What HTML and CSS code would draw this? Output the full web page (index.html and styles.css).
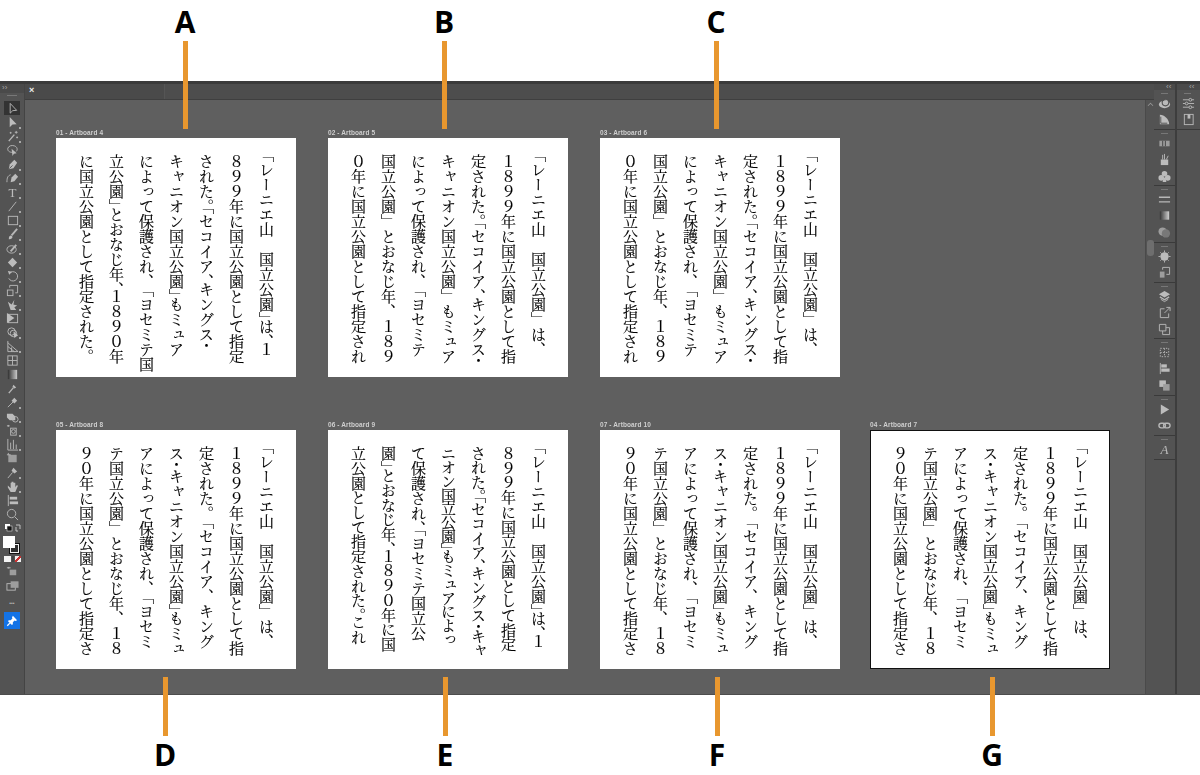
FILE: index.html
```html
<!DOCTYPE html>
<html lang="ja">
<head>
<meta charset="utf-8">
<title>Artboards</title>
<link rel="stylesheet" href="styles.css">
</head>
<body>
<div class="page">
  <div class="top-space"></div>
  <div class="app">
    <aside class="toolbar">
      <div class="collapse">››</div>
      <div class="grip"></div>
      <span class="tool selected"><svg viewBox="0 0 14 14"><path class="line" d="M4.5 1.5V12L7.3 9.3L11.5 9Z"/></svg></span>
      <span class="tool more"><svg viewBox="0 0 14 14"><path class="fill" d="M4 1V12L7 9.2L11.5 8.8Z"/></svg></span>
      <span class="tool more"><svg viewBox="0 0 14 14"><path class="line thick" d="M3 12L9 5"/><path class="line" d="M11 1V4M9.5 2.5H12.5M5 2V4M4 3H6M12 7V9M11 8H13"/></svg></span>
      <span class="tool"><svg viewBox="0 0 14 14"><path class="line" d="M7 9C3 9 1.500 7 2 4.500C3 2 6 1 9 2C12 3 13 6 11 8"/><path class="fill" d="M6 5L7 13L8.500 10.500L11.500 10Z"/></svg></span>
      <span class="tool more"><svg viewBox="0 0 14 14"><path class="fill" d="M9 2L12 5L8 11L3 12L4 7Z"/><path class="dark" d="M3.500 11.500L7 8"/></svg></span>
      <span class="tool more"><svg viewBox="0 0 14 14"><path class="fill" d="M10 2L13 5L9 10L5 11L6 6Z"/><path class="line" d="M1 11C1 6 2 4 5 3"/></svg></span>
      <span class="tool more"><svg viewBox="0 0 14 14"><text class="glyph" x="7" y="12" text-anchor="middle">T</text></svg></span>
      <span class="tool more"><svg viewBox="0 0 14 14"><path class="line" d="M3 12L11 2"/></svg></span>
      <span class="tool more"><svg viewBox="0 0 14 14"><rect class="line" x="2.500" y="2.500" width="10" height="9"/></svg></span>
      <span class="tool more"><svg viewBox="0 0 14 14"><path class="line thick2" d="M12 1L6 8"/><path class="fill" d="M3 12C3 9 4 8 5.500 8L7 9.500C7 11 5 12.500 3 12Z"/></svg></span>
      <span class="tool more"><svg viewBox="0 0 14 14"><ellipse class="line" cx="6" cy="8" rx="5" ry="4"/><path class="line thick2" d="M5 10L11 3"/></svg></span>
      <span class="tool more"><svg viewBox="0 0 14 14"><path class="fill" d="M7 2L12 7L7 12L2 7Z"/></svg></span>
      <span class="tool more"><svg viewBox="0 0 14 14"><path class="line" d="M3 9A5 5 0 1 0 5 2.500"/><path class="fill" d="M2 1L6.500 2L3.500 5Z"/></svg></span>
      <span class="tool more"><svg viewBox="0 0 14 14"><rect class="line" x="1.500" y="6.500" width="6" height="6"/><path class="line" d="M4 4V1.500H12.500V9.500H10"/></svg></span>
      <span class="tool more"><svg viewBox="0 0 14 14"><path class="fill" d="M2 4L6 7L9 2L8 7L12 8L9 10L11 13H5L4 10Z"/></svg></span>
      <span class="tool"><svg viewBox="0 0 14 14"><rect class="line" x="2.500" y="2.500" width="10" height="9"/><path class="fill" d="M1 1L9 6.500L1 12Z"/></svg></span>
      <span class="tool more"><svg viewBox="0 0 14 14"><circle class="line" cx="6" cy="6" r="4"/><circle class="line" cx="8" cy="8" r="3.500"/><path class="fill" d="M8 6L9 13L13 10Z"/></svg></span>
      <span class="tool more"><svg viewBox="0 0 14 14"><path class="line" d="M2 1V12.500H13L2 3M2 7L9 12.500M6 8V12.500"/></svg></span>
      <span class="tool"><svg viewBox="0 0 14 14"><rect class="line" x="2" y="2" width="10" height="10"/><path class="line" d="M7 2V12M2 7H12"/></svg></span>
      <span class="tool"><svg viewBox="0 0 14 14"><defs><linearGradient id="tool-grad"><stop offset="0" stop-color="#2e2e2e"/><stop offset="1" stop-color="#d8d8d8"/></linearGradient></defs><rect x="2" y="2" width="10" height="10" fill="url(#tool-grad)"/></svg></span>
      <span class="tool"><svg viewBox="0 0 14 14"><path class="line thick" d="M3 12L8 6"/><path class="fill" d="M8 3L11 6L9 7L7 5Z"/></svg></span>
      <span class="tool more"><svg viewBox="0 0 14 14"><path class="line" d="M2 12L8 6"/><path class="fill" d="M9 2L12 5L9 8L6 5Z"/></svg></span>
      <span class="tool more"><svg viewBox="0 0 14 14"><path class="fill" d="M1 4H7L10 7V11H4L1 8Z"/><circle class="line" cx="10" cy="10" r="3"/></svg></span>
      <span class="tool more"><svg viewBox="0 0 14 14"><path class="line" d="M1 2H4M2.500 1V3"/><rect class="line" x="5" y="4.500" width="6" height="7.500"/><circle class="line" cx="8" cy="8" r="2"/></svg></span>
      <span class="tool more"><svg viewBox="0 0 14 14"><path class="line" d="M2 1V13H13M5 12V5M8 12V2M11 12V7"/></svg></span>
      <span class="tool"><svg viewBox="0 0 14 14"><rect class="fill-soft" x="2.500" y="3" width="9" height="8"/><path class="line" d="M2.500 1V3M1 3H5"/></svg></span>
      <span class="tool more"><svg viewBox="0 0 14 14"><path class="line" d="M2 13L7 7"/><path class="fill" d="M8 2L12 6L9 8L6 5Z"/></svg></span>
      <span class="tool more"><svg viewBox="0 0 14 14"><path class="fill" d="M2 6L5 9V3H6V7V2H8V7V3H10V8L11 6H13L10 13H5L2 8Z"/></svg></span>
      <span class="tool"><svg viewBox="0 0 14 14"><path class="line" d="M2.500 1V13"/><rect class="fill" x="4" y="3" width="8" height="3"/><rect class="fill" x="4" y="8" width="9" height="3"/></svg></span>
      <span class="tool"><svg viewBox="0 0 14 14"><circle class="line" cx="6" cy="6" r="4.500"/><path class="line" d="M9.500 9.500L13 13"/></svg></span>
      <div class="defaults">
        <svg viewBox="0 0 20 10"><rect x="3" y="1" width="5" height="5" fill="#fff"/><rect x="5" y="3" width="5" height="5" fill="#111" stroke="#ddd" stroke-width=".6"/><path class="line" d="M14 2H18V6M16 8H14V4"/></svg>
      </div>
      <div class="swatches"><span class="stroke-box"></span><span class="fill-box"></span></div>
      <div class="color-row"><span class="color-white"></span><span class="color-grad"></span><span class="color-none"></span></div>
      <span class="tool tiny"><svg viewBox="0 0 14 14"><path class="fill-soft" d="M4 5H11V11H4Z"/><path class="line" d="M3 2V4M1 3H5"/></svg></span>
      <span class="tool tiny"><svg viewBox="0 0 14 14"><rect class="line" x="1" y="5" width="9" height="7"/><rect class="fill-soft" x="5" y="2.500" width="8.500" height="7"/></svg></span>
      <div class="dots">•••</div>
      <div class="pin"><svg viewBox="0 0 14 14"><path class="white" d="M8 1L13 6L11 7L10 6.500L8 8.500L8 11L6.500 11.500L2.500 7.500L3 6L5.500 6L7.500 4L7 3Z"/><path class="white-line" d="M1.500 12.500L4.500 9.500"/></svg></div>
    </aside>

    <div class="workspace">
      <div class="tabbar">
        <div class="tab"><span class="tab-close">×</span></div>
      </div>
      <div class="work-row">
        <main class="canvas">
          <div class="board-row">
            <section class="board">
              <div class="board-label">01 - Artboard 4</div>
              <div class="sheet">
                <p><span class="h">「</span>レーニエ山　国立公園<span class="h">」</span>は<span class="h">、</span>１</p>
                <p>８９９年に国立公園として指定</p>
                <p>された<span class="h">。「</span>セコイア<span class="h">、</span>キングス<span class="h">・</span></p>
                <p>キャニオン国立公園<span class="h">」</span>もミュア</p>
                <p>によって保護され、<span class="h">「</span>ヨセミテ国</p>
                <p>立公園<span class="h">」</span>とおなじ年<span class="h">、</span>１８９０年</p>
                <p>に国立公園として指定された。</p>
              </div>
            </section>
            <section class="board">
              <div class="board-label">02 - Artboard 5</div>
              <div class="sheet">
                <p><span class="h">「</span>レーニエ山　国立公園」は、</p>
                <p>１８９９年に国立公園として指</p>
                <p>定された<span class="h">。「</span>セコイア<span class="h">、</span>キングス<span class="h">・</span></p>
                <p>キャニオン国立公園」もミュア</p>
                <p>によって保護され、<span class="h">「</span>ヨセミテ</p>
                <p>国立公園」とおなじ年、１８９</p>
                <p>０年に国立公園として指定され</p>
              </div>
            </section>
            <section class="board">
              <div class="board-label">03 - Artboard 6</div>
              <div class="sheet">
                <p><span class="h">「</span>レーニエ山　国立公園」は、</p>
                <p>１８９９年に国立公園として指</p>
                <p>定された<span class="h">。「</span>セコイア<span class="h">、</span>キングス<span class="h">・</span></p>
                <p>キャニオン国立公園」もミュア</p>
                <p>によって保護され、<span class="h">「</span>ヨセミテ</p>
                <p>国立公園」とおなじ年、１８９</p>
                <p>０年に国立公園として指定され</p>
              </div>
            </section>
          </div>
          <div class="board-row">
            <section class="board">
              <div class="board-label">05 - Artboard 8</div>
              <div class="sheet">
                <p><span class="h">「</span>レーニエ山　国立公園」は、</p>
                <p>１８９９年に国立公園として指</p>
                <p>定された。<span class="h">「</span>セコイア、キング</p>
                <p>ス<span class="h">・</span>キャニオン国立公園<span class="h">」</span>もミュ</p>
                <p>アによって保護され、<span class="h">「</span>ヨセミ</p>
                <p>テ国立公園」とおなじ年、１８</p>
                <p>９０年に国立公園として指定さ</p>
              </div>
            </section>
            <section class="board">
              <div class="board-label">06 - Artboard 9</div>
              <div class="sheet">
                <p><span class="h">「</span>レーニエ山　国立公園<span class="h">」</span>は<span class="h">、</span>１</p>
                <p class="t1">８９９年に国立公園として指定</p>
                <p class="t2">された<span class="h">。「</span>セコイア<span class="h">、</span>キングス<span class="h">・</span>キャ</p>
                <p class="t3">ニオン国立公園<span class="h">」</span>もミュアによっ</p>
                <p>て保護され<span class="h">、「</span>ヨセミテ国立公</p>
                <p class="t1">園<span class="h">」</span>とおなじ年<span class="h">、</span>１８９０年に国</p>
                <p class="t1">立公園として指定された<span class="h">。</span>これ</p>
              </div>
            </section>
            <section class="board">
              <div class="board-label">07 - Artboard 10</div>
              <div class="sheet">
                <p><span class="h">「</span>レーニエ山　国立公園」は、</p>
                <p>１８９９年に国立公園として指</p>
                <p>定された。<span class="h">「</span>セコイア、キング</p>
                <p>ス<span class="h">・</span>キャニオン国立公園<span class="h">」</span>もミュ</p>
                <p>アによって保護され、<span class="h">「</span>ヨセミ</p>
                <p>テ国立公園」とおなじ年、１８</p>
                <p>９０年に国立公園として指定さ</p>
              </div>
            </section>
            <section class="board board-last">
              <div class="board-label">04 - Artboard 7</div>
              <div class="sheet sheet-active">
                <p><span class="h">「</span>レーニエ山　国立公園」は、</p>
                <p>１８９９年に国立公園として指</p>
                <p>定された。<span class="h">「</span>セコイア、キング</p>
                <p>ス<span class="h">・</span>キャニオン国立公園<span class="h">」</span>もミュ</p>
                <p>アによって保護され、<span class="h">「</span>ヨセミ</p>
                <p>テ国立公園」とおなじ年、１８</p>
                <p>９０年に国立公園として指定さ</p>
              </div>
            </section>
          </div>
        </main>
        <div class="scrollbar"><span class="scroll-up"></span><span class="scroll-thumb"></span></div>
      </div>
    </div>

    <aside class="dock">
      <div class="collapse dock-collapse">‹‹</div>
      <div class="dock-group g1">
        <span class="dock-icon"><svg viewBox="0 0 14 14"><ellipse class="fill" cx="7" cy="8" rx="6" ry="4"/><circle class="dark-line" cx="8" cy="6" r="3.500"/><circle class="line" cx="8.500" cy="5.500" r="2"/></svg></span>
        <span class="dock-icon"><svg viewBox="0 0 14 14"><path class="fill" d="M2 2V12H12C12 7 7 2 2 2Z"/><path class="dark" d="M3 4V11H10"/></svg></span>
      </div>
      <div class="dock-group g2">
        <span class="dock-icon"><svg viewBox="0 0 14 14"><rect class="fill-soft" x="1.500" y="4" width="11" height="6"/><path class="dark-line" d="M5 4V10M8 4V10"/></svg></span>
        <span class="dock-icon"><svg viewBox="0 0 14 14"><path class="fill" d="M3 7H11V13H3Z"/><path class="line" d="M5 7V2M7 7V1M9 7L11 3"/></svg></span>
        <span class="dock-icon"><svg viewBox="0 0 14 14"><circle class="fill" cx="7" cy="4" r="3"/><circle class="fill" cx="3.500" cy="8.500" r="3"/><circle class="fill" cx="10.500" cy="8.500" r="3"/><path class="fill" d="M6 8H8L9 13H5Z"/></svg></span>
      </div>
      <div class="dock-group g3">
        <span class="dock-icon"><svg viewBox="0 0 14 14"><path class="line thick" d="M1 4.500H13M1 9.500H13"/></svg></span>
        <span class="dock-icon"><svg viewBox="0 0 14 14"><defs><linearGradient id="dock-grad"><stop offset="0" stop-color="#333"/><stop offset="1" stop-color="#ddd"/></linearGradient></defs><rect x="2" y="2.500" width="10" height="9" fill="url(#dock-grad)"/></svg></span>
        <span class="dock-icon"><svg viewBox="0 0 14 14"><circle class="fill-soft" cx="5" cy="6" r="4.500"/><circle class="fill-dim" cx="8.500" cy="8" r="4.500"/></svg></span>
      </div>
      <div class="dock-group g4">
        <span class="dock-icon"><svg viewBox="0 0 14 14"><circle class="fill" cx="7" cy="7" r="4.500"/><path class="line" d="M7 .5V2.500M7 11.500V13.500M.5 7H2.500M11.500 7H13.500M2.500 2.500L4 4M10 10L11.500 11.500M2.500 11.500L4 10M10 4L11.500 2.500"/></svg></span>
        <span class="dock-icon"><svg viewBox="0 0 14 14"><path class="line" d="M5 4V1.500H12.500V9H9"/><rect class="fill-soft" x="2" y="6" width="5" height="6.500"/></svg></span>
      </div>
      <div class="dock-group g5">
        <span class="dock-icon"><svg viewBox="0 0 14 14"><path class="fill" d="M7 1L13 4.500L7 8L1 4.500Z"/><path class="line thick" d="M2 7.500L7 10.500L12 7.500"/><path class="line" d="M3 10L7 12.500L11 10"/></svg></span>
        <span class="dock-icon"><svg viewBox="0 0 14 14"><path class="line" d="M7 3H2.500V12.500H11.500V8M7 7.500L12.500 2M9 1.500H13V5.500"/></svg></span>
        <span class="dock-icon"><svg viewBox="0 0 14 14"><path class="line" d="M1.500 1.500H8.500V8.500H1.500ZM8.500 5H12.500V12.500H5V8.500"/></svg></span>
      </div>
      <div class="dock-group g6">
        <span class="dock-icon"><svg viewBox="0 0 14 14"><rect class="dash" x="2.500" y="2.500" width="9" height="9"/><path class="dash" d="M7 2.500V11.500M2.500 7H11.500"/></svg></span>
        <span class="dock-icon"><svg viewBox="0 0 14 14"><path class="line" d="M2.500 1V13"/><rect class="fill" x="3.500" y="2.500" width="6" height="3.500"/><rect class="fill" x="3.500" y="7" width="9" height="3.500"/></svg></span>
        <span class="dock-icon"><svg viewBox="0 0 14 14"><rect class="fill" x="1.500" y="1.500" width="7" height="7"/><rect class="fill-soft" x="5.500" y="5.500" width="7" height="7"/></svg></span>
      </div>
      <div class="dock-group g7">
        <span class="dock-icon"><svg viewBox="0 0 14 14"><path class="fill" d="M3 1.500L12 7L3 12.500Z"/></svg></span>
        <span class="dock-icon"><svg viewBox="0 0 14 14"><rect class="line thick" x="1" y="4.500" width="7" height="5" rx="2.500"/><rect class="line thick" x="6" y="4.500" width="7" height="5" rx="2.500"/></svg></span>
      </div>
      <div class="dock-group g8">
        <span class="dock-icon"><svg viewBox="0 0 14 14"><text class="glyph script" x="7" y="12" text-anchor="middle">A</text></svg></span>
      </div>
    </aside>
    <aside class="dock-narrow">
      <div class="collapse dock-collapse">‹‹</div>
      <div class="dock-group g1">
        <span class="dock-icon"><svg viewBox="0 0 14 14"><path class="line" d="M1 3H13M1 7H13M1 11H13"/><circle class="dark-fill" cx="9" cy="3" r="1.500"/><circle class="dark-fill" cx="5" cy="7" r="1.500"/><circle class="dark-fill" cx="9" cy="11" r="1.500"/></svg></span>
        <span class="dock-icon"><svg viewBox="0 0 14 14"><rect class="line" x="2.500" y="1.500" width="9.500" height="11"/><rect class="fill" x="6" y="1.500" width="3" height="4.500"/></svg></span>
      </div>
    </aside>
  </div>

  <div class="mark mark-a"><b>A</b><i></i></div>
  <div class="mark mark-b"><b>B</b><i></i></div>
  <div class="mark mark-c"><b>C</b><i></i></div>
  <div class="mark low mark-d"><i></i><b>D</b></div>
  <div class="mark low mark-e"><i></i><b>E</b></div>
  <div class="mark low mark-f"><i></i><b>F</b></div>
  <div class="mark low mark-g"><i></i><b>G</b></div>
</div>
</body>
</html>
```
FILE: styles.css
```css
* { box-sizing: border-box; }
html, body { margin: 0; padding: 0; background: #fff; }
.page { position: relative; width: 1200px; height: 775px; overflow: hidden; background: #fff; }
.top-space { height: 81px; }
.app { display: flex; height: 614px; background: #5f5f5f; border-top: 3px solid #3b3b3b; border-bottom: 1px solid #4d4d4d; }

/* left tool column */
.toolbar { width: 25px; flex: none; background: #535353; border-right: 1px solid #444; display: flex; flex-direction: column; align-items: center; }
.collapse { height: 9px; width: 100%; font: 8px/7px "Liberation Sans", sans-serif; color: #a8a8a8; padding-left: 2px; background: #4a4a4a; }
.dock-collapse { height: 6px; line-height: 5px; padding-left: 12px; }
.grip { height: 8px; width: 100%; position: relative; }
.grip::after { content: ""; position: absolute; left: 7px; top: 2px; width: 10px; height: 1px; background: #787878; }
.tool { position: relative; width: 16px; height: 14px; display: flex; align-items: center; justify-content: center; flex: none; }
.tool svg, .dock-icon svg { width: 13px; height: 13px; filter: blur(.3px); opacity: .9; }
.tool.selected { background: #333; }
.tool.more::after { content: ""; position: absolute; right: -1px; bottom: 0; width: 2px; height: 2px; background: #a8a8a8; }
.line, .thick, .thick2 { fill: none; stroke: #c2c2c2; stroke-width: 1; }
.thick { stroke-width: 1.500; }
.thick2 { stroke-width: 2; }
.fill { fill: #c8c8c8; }
.fill-soft { fill: #a6a6a6; }
.fill-dim { fill: #7d7d7d; }
.dark { fill: none; stroke: #535353; stroke-width: 1; }
.dark-line { fill: none; stroke: #535353; stroke-width: 1.200; }
.dark-fill { fill: #535353; stroke: #c2c2c2; stroke-width: 1; }
.dash { fill: none; stroke: #c2c2c2; stroke-width: 1; stroke-dasharray: 1.500 1.500; }
.glyph { font: 14px "Liberation Serif", serif; fill: #c8c8c8; }
.script { font-style: italic; }
.white { fill: #fff; }
.white-line { fill: none; stroke: #fff; stroke-width: 1.500; }

.defaults { height: 12px; width: 20px; margin-top: 2px; flex: none; }
.defaults svg { display: block; width: 20px; height: 10px; }
.swatches { position: relative; width: 18px; height: 18px; flex: none; margin-top: 1px; }
.fill-box { position: absolute; left: 0; top: 0; width: 12px; height: 12px; background: #fff; }
.stroke-box { position: absolute; left: 6px; top: 7px; width: 11px; height: 11px; background: #2e2e2e; border: 2px solid #f0f0f0; outline: 1px solid #111; outline-offset: -1px; }
.color-row { display: flex; height: 7px; margin-top: 2px; flex: none; gap: 1px; }
.color-row span { display: block; height: 6px; }
.color-white { width: 7px; background: #f4f4f4; }
.color-grad { width: 2px; background: #444; }
.color-none { width: 6px; background: linear-gradient(135deg, #eee 40%, #c83232 40%, #c83232 60%, #eee 60%); }
.tool.tiny { margin-top: 1px; }
.tool.tiny + .tool.tiny { margin-top: 0; }
.dots { height: 12px; margin-top: 5px; font: 5px/12px "Liberation Sans", sans-serif; color: #bbb; flex: none; }
.pin { width: 16px; height: 17px; margin-top: 3px; background: #1473e6; display: flex; align-items: center; justify-content: center; flex: none; }
.pin svg { width: 12px; height: 12px; }

/* centre */
.workspace { flex: 1; min-width: 0; display: flex; flex-direction: column; }
.tabbar { height: 16px; flex: none; background: #4d4d4d; border-bottom: 1px solid #3f3f3f; }
.tab { width: 140px; height: 15px; background: #4a4a4a; padding-left: 4px; color: #eee; font: bold 9px/13px "Liberation Sans", sans-serif; border-right: 1px solid #555; }
.tab-close { display: block; }
.work-row { flex: 1; min-height: 0; display: flex; }
.canvas { flex: 1; min-width: 0; padding-top: 28px; padding-left: 31px; display: flex; flex-direction: column; gap: 43px; background: #5f5f5f; }
.board-row { display: flex; gap: 32px; }
.board { width: 240px; flex: none; }
.board-last { margin-left: -2px; }
.board-label { height: 10px; font: bold 6.500px/9px "Liberation Sans", sans-serif; color: #cfcfcf; letter-spacing: .1px; white-space: nowrap; filter: blur(.2px); }
.sheet { width: 240px; height: 239px; background: #fff; writing-mode: vertical-rl; padding: 16px 15px 0 0; font-family: "Noto Serif CJK JP", "Noto Sans CJK JP", sans-serif; font-size: 15px; line-height: 30px; color: #000; font-weight: 400; -webkit-text-stroke: .15px #000; text-spacing-trim: space-all; filter: blur(.25px); }
.sheet p { margin: 0; white-space: nowrap; }
.h { font-feature-settings: "vhal"; }
.t1 { letter-spacing: -.3px; }
.t2 { letter-spacing: -.8px; }
.t3 { letter-spacing: -1.2px; }
.sheet-active { border: 1px solid #111; padding: 15px 14px 0 0; }
.scrollbar { width: 9px; flex: none; background: #535353; border-left: 1px solid #4a4a4a; position: relative; display: flex; flex-direction: column; align-items: center; }
.scroll-up { width: 5px; height: 5px; margin-top: 3px; border-top: 1px solid #9a9a9a; border-left: 1px solid #9a9a9a; transform: rotate(45deg) scale(.8); }
.scroll-thumb { width: 7px; height: 16px; margin-top: 132px; border-radius: 3px; background: #6e6e6e; }

/* right docks */
.dock { width: 23px; flex: none; background: #535353; border-right: 2px solid #3d3d3d; }
.dock-narrow { width: 23px; flex: none; background: #535353; }
.dock-group { display: flex; flex-direction: column; align-items: center; border-bottom: 1px solid #3a3a3a; padding-top: 5px; position: relative; }
.dock-group::before { content: ""; position: absolute; top: 3px; left: 7px; width: 7px; height: 1px; background: #777; }
.dock-icon { height: 16.500px; width: 16px; display: flex; align-items: center; justify-content: center; flex: none; }
.g1 { height: 40px; }
.g2 { height: 56px; }
.g3 { height: 57px; }
.g4 { height: 40px; }
.g5 { height: 56px; }
.g6 { height: 57px; }
.g7 { height: 40px; }
.g8 { height: 24px; }

/* callouts */
.mark { position: absolute; top: 6px; width: 40px; display: flex; flex-direction: column; align-items: center; }
.mark b { display: block; font: bold 30px/32px "Open Sans", "Liberation Sans", sans-serif; color: #000; margin-bottom: 3px; }
.mark i { display: block; width: 5px; height: 88px; background: #e8972f; }
.mark.low { top: 677px; }
.mark.low i { height: 59px; }
.mark.low b { line-height: 38px; margin-bottom: 0; }
.mark-a { left: 165px; }
.mark-b { left: 424px; }
.mark-c { left: 696px; }
.mark-d { left: 145px; }
.mark-e { left: 425px; }
.mark-f { left: 697px; }
.mark-g { left: 972px; }
```
